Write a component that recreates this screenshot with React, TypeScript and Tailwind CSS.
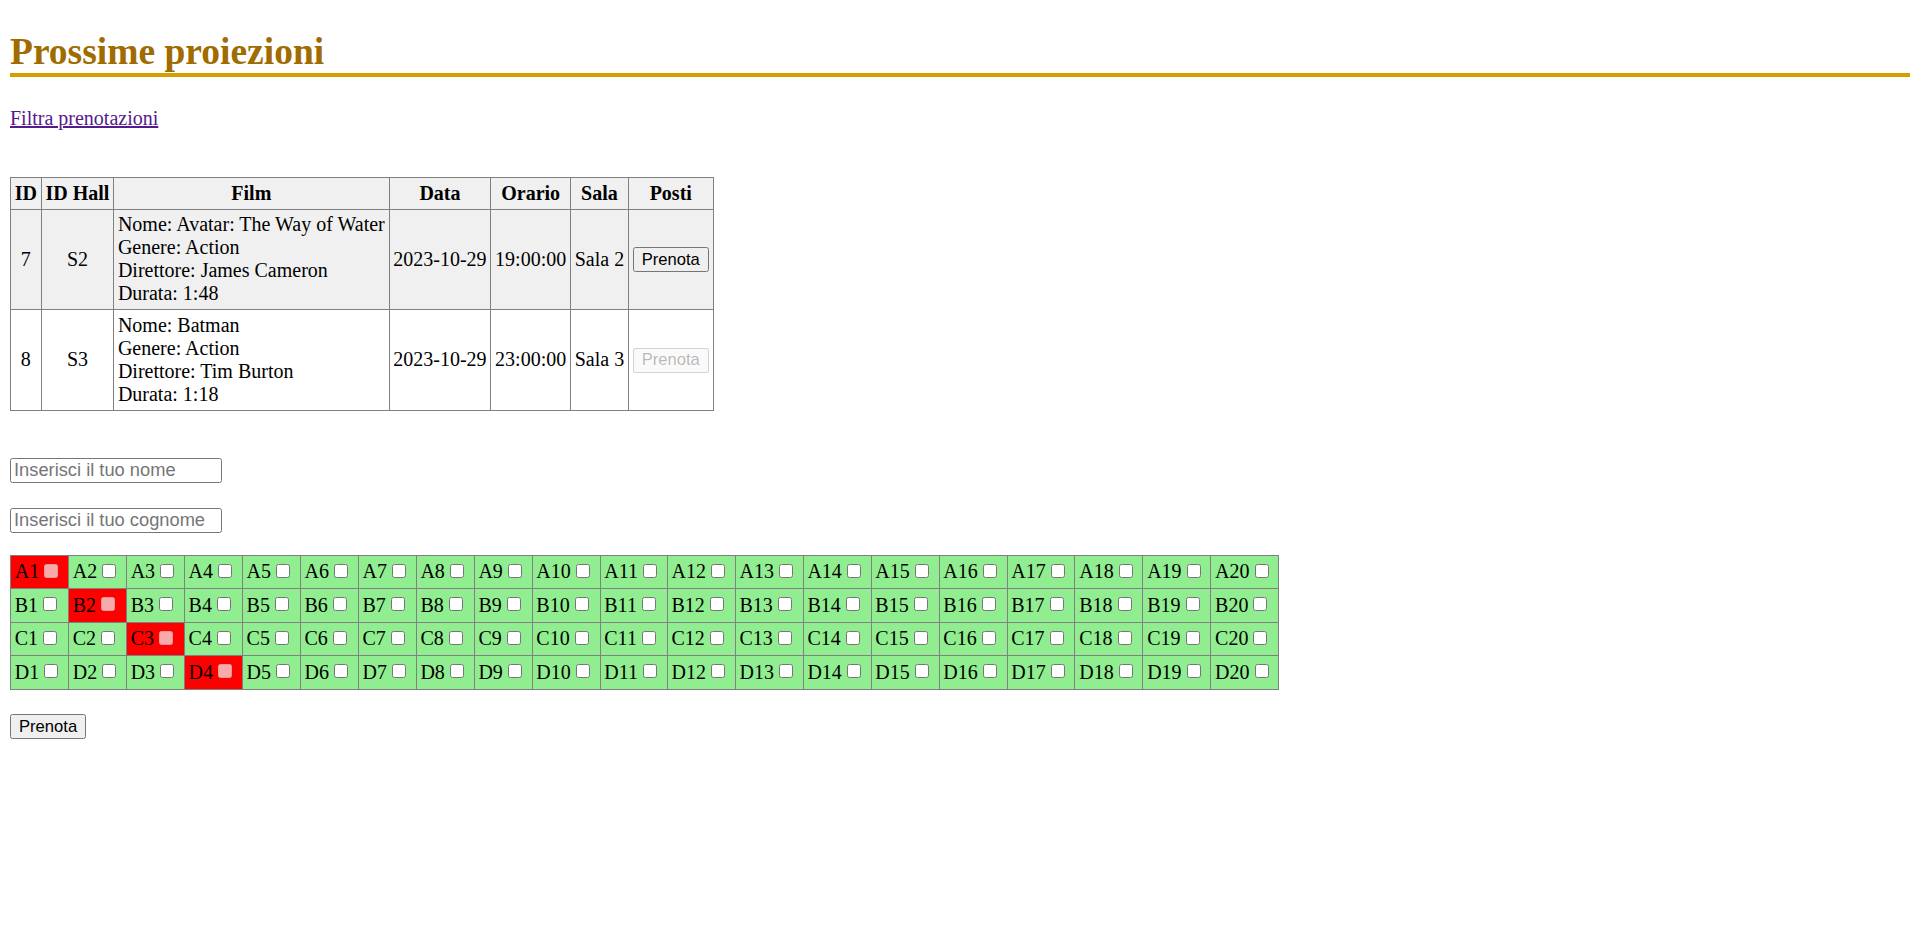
import React from "react";

const screenings = [
  {
    id: 7,
    hall: "S2",
    film: ["Nome: Avatar: The Way of Water", "Genere: Action", "Direttore: James Cameron", "Durata: 1:48"],
    date: "2023-10-29",
    time: "19:00:00",
    room: "Sala 2",
    available: true,
  },
  {
    id: 8,
    hall: "S3",
    film: ["Nome: Batman", "Genere: Action", "Direttore: Tim Burton", "Durata: 1:18"],
    date: "2023-10-29",
    time: "23:00:00",
    room: "Sala 3",
    available: false,
  },
];

const rows = ["A", "B", "C", "D"];
const seatNumbers = Array.from({ length: 20 }, (_, i) => i + 1);
// seats already taken
const taken = ["A1", "B2", "C3", "D4"];

const cell = "border border-[#808080] p-[3.75px]";

function Button({ disabled, children }: { disabled?: boolean; children: React.ReactNode }) {
  return (
    <button
      disabled={disabled}
      className={
        "rounded-[2.5px] border px-[8px] py-[1.5px] font-['Liberation_Sans',Arial,sans-serif] text-[16.6px] leading-[normal] " +
        (disabled
          ? "border-[rgba(118,118,118,0.3)] bg-[rgba(239,239,239,0.3)] text-[rgba(16,16,16,0.3)]"
          : "border-[#767676] bg-[#efefef] text-black")
      }
    >
      {children}
    </button>
  );
}

export default function App() {
  return (
    <div className="px-[10px] pb-[20px] font-['Liberation_Serif','Times_New_Roman',serif] text-[20px] leading-[normal] text-black">
      <h1 className="mt-[30px] mr-[2px] border-b-4 border-[#d4a000] text-[37.5px] font-bold leading-[normal] text-[#a06c00]">
        Prossime proiezioni
      </h1>

      <p className="mt-[30px]">
        <a href="#" className="text-[#551a8b] underline">
          Filtra prenotazioni
        </a>
      </p>

      {/* Screenings */}
      <table className="mt-[47px] border-collapse border border-[#808080]">
        <thead>
          <tr className="bg-[#f0f0f0]">
            {["ID", "ID Hall", "Film", "Data", "Orario", "Sala", "Posti"].map((h) => (
              <th key={h} className={cell + " text-center font-bold"}>
                {h}
              </th>
            ))}
          </tr>
        </thead>
        <tbody>
          {screenings.map((s, i) => (
            <tr key={s.id} className={i % 2 === 0 ? "bg-[#f0f0f0]" : "bg-white"}>
              <td className={cell + " text-center"}>{s.id}</td>
              <td className={cell + " text-center"}>{s.hall}</td>
              <td className={cell + " text-left"}>
                {s.film.map((line) => (
                  <div key={line}>{line}</div>
                ))}
              </td>
              <td className={cell + " text-center"}>{s.date}</td>
              <td className={cell + " text-center"}>{s.time}</td>
              <td className={cell + " text-center"}>{s.room}</td>
              <td className={cell + " text-center"}>
                <Button disabled={!s.available}>Prenota</Button>
              </td>
            </tr>
          ))}
        </tbody>
      </table>

      {/* Booking form */}
      <div className="mt-[47px] flex flex-col items-start gap-[25px]">
        <input
          type="text"
          placeholder="Inserisci il tuo nome"
          className="h-[25px] w-[212px] rounded-[2.5px] border border-[#767676] px-[3px] font-['Liberation_Sans',Arial,sans-serif] text-[18.3px] placeholder:text-[#757575]"
        />
        <input
          type="text"
          placeholder="Inserisci il tuo cognome"
          className="h-[25px] w-[212px] rounded-[2.5px] border border-[#767676] px-[3px] font-['Liberation_Sans',Arial,sans-serif] text-[18.3px] placeholder:text-[#757575]"
        />
      </div>

      <table className="mt-[22px] border-collapse border border-[#808080]">
        <tbody>
          {rows.map((r) => (
            <tr key={r}>
              {seatNumbers.map((n) => {
                const seat = r + n;
                const isTaken = taken.includes(seat);
                return (
                  <td
                    key={seat}
                    className={
                      "h-[33.5px] whitespace-nowrap border border-[#808080] px-[3.75px] " +
                      (isTaken ? "bg-[#ff0000]" : "bg-[#90ee90]")
                    }
                  >
                    {seat}
                    <input
                      type="checkbox"
                      disabled={isTaken}
                      className={
                        "mt-[3px] mr-[6px] mb-[3px] ml-[5px] h-[14px] w-[14px] appearance-none rounded-[2.5px] border align-[-2.5px] " +
                        (isTaken ? "border-[#e59a9a] bg-[#f8a9a9]" : "border-[#767676] bg-white")
                      }
                    />
                  </td>
                );
              })}
            </tr>
          ))}
        </tbody>
      </table>

      <div className="mt-[24px]">
        <Button>Prenota</Button>
      </div>
    </div>
  );
}
